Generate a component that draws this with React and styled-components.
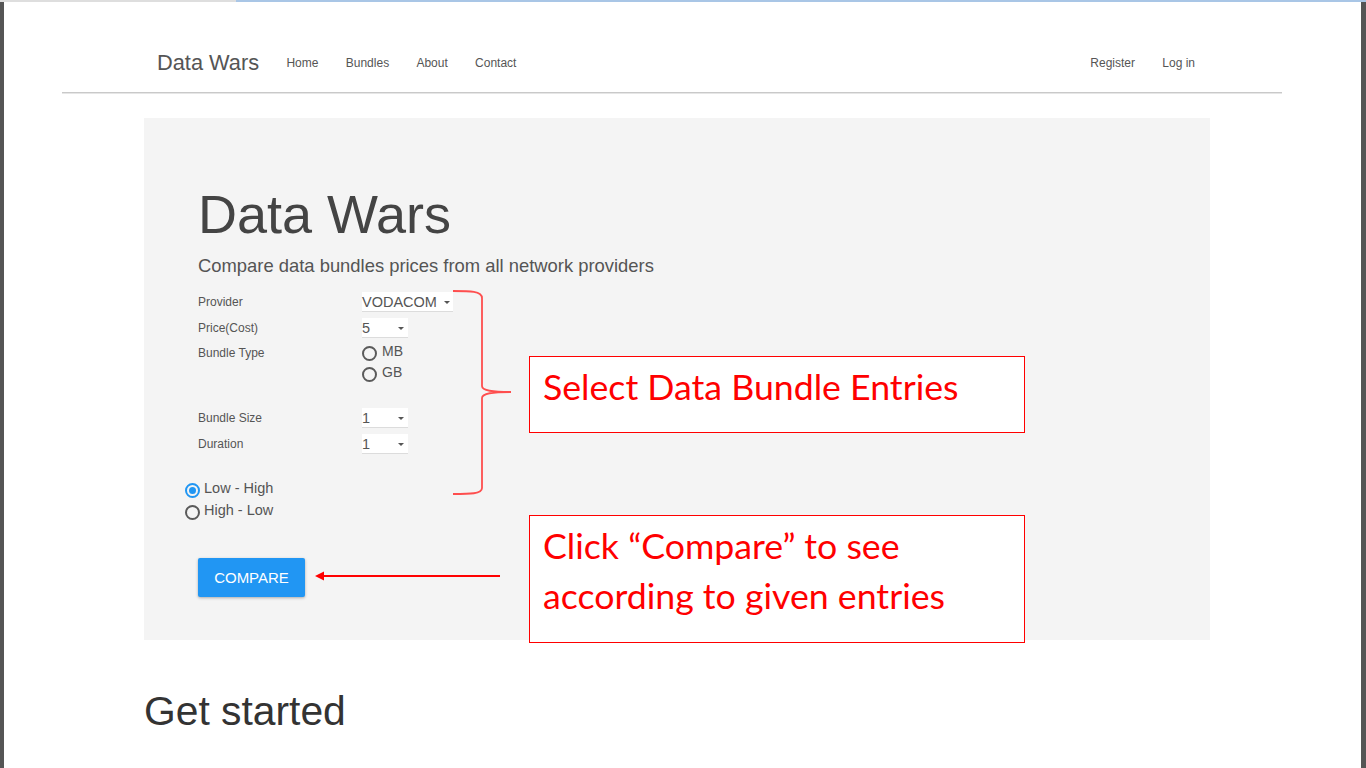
import React from "react";
import styled, { createGlobalStyle } from "styled-components";

const GlobalStyle = createGlobalStyle`
  html, body { margin: 0; padding: 0; background: #fff; }
  body {
    font-family: "Liberation Sans", Arial, Helvetica, sans-serif;
    color: #555;
  }
  * { box-sizing: border-box; }
`;

const Page = styled.div`
  display: flex;
  flex-direction: column;
  height: 768px;
  overflow: hidden;
`;

const TopStrip = styled.div`
  display: flex;
  height: 2px;
  flex: none;
`;

const StripSegment = styled.div`
  height: 100%;
  background: ${(p) => p.$color};
  width: ${(p) => (p.$width ? `${p.$width}px` : "auto")};
  flex: ${(p) => (p.$grow ? 1 : "none")};
`;

const Frame = styled.div`
  flex: 1;
  border-left: 4px solid #555;
  border-right: 5px solid #555;
`;

const Container = styled.div`
  margin-left: 58px;
  width: 1220px;
`;

const Navbar = styled.nav`
  display: flex;
  align-items: center;
  gap: 27.3px;
  height: 91px;
  padding: 36px 87px 4px 95px;
  border-bottom: 1px solid #c9c9c9;
  box-shadow: 0 1px 0 #e6e6e6;
`;

const Brand = styled.a`
  font-size: 21.8px;
  line-height: 1;
  color: #555;
  text-decoration: none;
`;

const NavLink = styled.a`
  font-size: 12px;
  line-height: 1;
  color: #555;
  text-decoration: none;
`;

const Spacer = styled.div`
  flex: 1;
`;

const Jumbotron = styled.section`
  position: relative;
  margin: 25px 0 0 82px;
  width: 1066px;
  height: 522px;
  background: #f4f4f4;
  padding: 67px 54px 0;
`;

const Title = styled.h1`
  margin: 0;
  font-size: 54px;
  line-height: 58px;
  font-weight: 400;
  color: #444;
`;

const Lead = styled.p`
  margin: 10px 0 0;
  font-size: 18.4px;
  line-height: 26px;
  color: #555;
`;

const Form = styled.form`
  margin-top: 13px;
`;

const FormRow = styled.div`
  display: grid;
  grid-template-columns: 164px auto;
  align-items: ${(p) => p.$align || "center"};
  justify-items: start;
  margin-top: ${(p) => p.$gap || 0}px;
`;

const Label = styled.span`
  font-size: 12px;
  line-height: ${(p) => p.$lh || 20}px;
  color: #555;
`;

const Select = styled.div`
  display: inline-flex;
  align-items: center;
  justify-content: space-between;
  width: ${(p) => p.$width}px;
  height: 20px;
  padding: 0 ${(p) => p.$pr || 4}px 0 0;
  background: #fff;
  border-bottom: 1px solid #dcdcdc;
  font-size: 14.5px;
  color: #555;
`;

const Caret = styled.span`
  width: 0;
  height: 0;
  margin-top: 1px;
  border-left: ${(p) => p.$size}px solid transparent;
  border-right: ${(p) => p.$size}px solid transparent;
  border-top: ${(p) => p.$size}px solid #555;
`;

const RadioList = styled.div`
  display: flex;
  flex-direction: column;
  gap: 4px;
  margin-left: ${(p) => p.$shift || 0}px;
  margin-top: ${(p) => p.$top || 0}px;
`;

const RadioItem = styled.label`
  display: flex;
  align-items: flex-start;
  gap: ${(p) => p.$gap}px;
  font-size: ${(p) => p.$fs}px;
  line-height: ${(p) => p.$lh}px;
  color: #555;
`;

const RadioCircle = styled.span`
  flex: none;
  display: flex;
  align-items: center;
  justify-content: center;
  width: 15px;
  height: 15px;
  margin-top: ${(p) => p.$offset}px;
  border-radius: 50%;
  border: 2px solid ${(p) => (p.$checked ? "#2196f3" : "#5a5a5a")};

  &::after {
    content: "";
    display: ${(p) => (p.$checked ? "block" : "none")};
    width: 7px;
    height: 7px;
    border-radius: 50%;
    background: #2196f3;
  }
`;

const CompareButton = styled.button`
  display: block;
  margin-top: 38px;
  width: 107px;
  height: 39px;
  padding: 0;
  border: none;
  border-radius: 2px;
  background: #2196f3;
  color: #fff;
  font-family: "Liberation Sans", Arial, sans-serif;
  font-size: 15px;
  box-shadow: 0 1px 3px rgba(0, 0, 0, 0.3);
`;

const Callout = styled.div`
  position: absolute;
  left: ${(p) => p.$left}px;
  top: ${(p) => p.$top}px;
  width: 496px;
  height: ${(p) => p.$height}px;
  padding: 5px 13px 0;
  background: #fff;
  border: 1px solid #ff0000;
  font-family: Lato, "Open Sans", sans-serif;
  font-size: 35.7px;
  line-height: 50px;
  color: #ff0000;
`;

const Overlay = styled.svg`
  position: absolute;
  left: ${(p) => p.$left}px;
  top: ${(p) => p.$top}px;
  overflow: visible;
`;

const SectionTitle = styled.h2`
  margin: 49px 0 0 82px;
  font-size: 40.8px;
  line-height: 44px;
  font-weight: 400;
  color: #333;
`;

function Radio({ checked, label, fs, lh, offset, gap }) {
  return (
    <RadioItem $fs={fs} $lh={lh} $gap={gap}>
      <RadioCircle $checked={checked} $offset={offset} />
      {label}
    </RadioItem>
  );
}

export default function App() {
  return (
    <>
      <GlobalStyle />
      <Page>
        <TopStrip>
          <StripSegment $color="#dedede" $width={236} />
          <StripSegment $color="#a9c6e6" $grow />
        </TopStrip>
        <Frame>
          <Container>
            <Navbar>
              <Brand href="#">Data Wars</Brand>
              <NavLink href="#">Home</NavLink>
              <NavLink href="#">Bundles</NavLink>
              <NavLink href="#">About</NavLink>
              <NavLink href="#">Contact</NavLink>
              <Spacer />
              <NavLink href="#">Register</NavLink>
              <NavLink href="#">Log in</NavLink>
            </Navbar>

            <Jumbotron>
              <Title>Data Wars</Title>
              <Lead>Compare data bundles prices from all network providers</Lead>

              <Form onSubmit={(e) => e.preventDefault()}>
                <FormRow>
                  <Label>Provider</Label>
                  <Select $width={91} $pr={3}>
                    VODACOM <Caret $size={3} />
                  </Select>
                </FormRow>
                <FormRow $gap={6}>
                  <Label>Price(Cost)</Label>
                  <Select $width={46}>
                    5 <Caret $size={3} />
                  </Select>
                </FormRow>
                <FormRow $gap={6} $align="start">
                  <Label $lh={18}>Bundle Type</Label>
                  <RadioList>
                    <Radio label="MB" fs={14} lh={15} offset={2} gap={5} />
                    <Radio label="GB" fs={14} lh={15} offset={2} gap={5} />
                  </RadioList>
                </FormRow>
                <FormRow $gap={26}>
                  <Label>Bundle Size</Label>
                  <Select $width={46}>
                    1 <Caret $size={3} />
                  </Select>
                </FormRow>
                <FormRow $gap={6}>
                  <Label>Duration</Label>
                  <Select $width={46}>
                    1 <Caret $size={3} />
                  </Select>
                </FormRow>

                <RadioList $shift={-13} $top={26}>
                  <Radio checked label="Low - High" fs={14.5} lh={17} offset={3} gap={4} />
                  <Radio label="High - Low" fs={14.5} lh={17} offset={3} gap={4} />
                </RadioList>

                <CompareButton type="submit">COMPARE</CompareButton>
              </Form>

              <Overlay $left={304} $top={168} width="68" height="214" viewBox="0 0 68 214">
                <path
                  d="M5 5 C22 5, 34 5, 34 12 L34 100 C34 105, 45 106, 63 106 M63 106 C45 106, 34 107, 34 112 L34 202 C34 208, 22 208, 5 208"
                  fill="none"
                  stroke="#ff3030"
                  strokeOpacity="0.85"
                  strokeWidth="1.8"
                />
              </Overlay>

              <Callout $left={385} $top={238} $height={77}>
                Select Data Bundle Entries
              </Callout>

              <Overlay $left={168} $top={452} width="192" height="12" viewBox="0 0 192 12">
                <line x1="11" y1="6" x2="188" y2="6" stroke="#ff0000" strokeWidth="1.8" />
                <polygon points="3,6 12,1.5 12,10.5" fill="#ff0000" />
              </Overlay>

              <Callout $left={385} $top={397} $height={128}>
                Click “Compare” to see
                <br />
                according to given entries
              </Callout>
            </Jumbotron>

            <SectionTitle>Get started</SectionTitle>
          </Container>
        </Frame>
      </Page>
    </>
  );
}
